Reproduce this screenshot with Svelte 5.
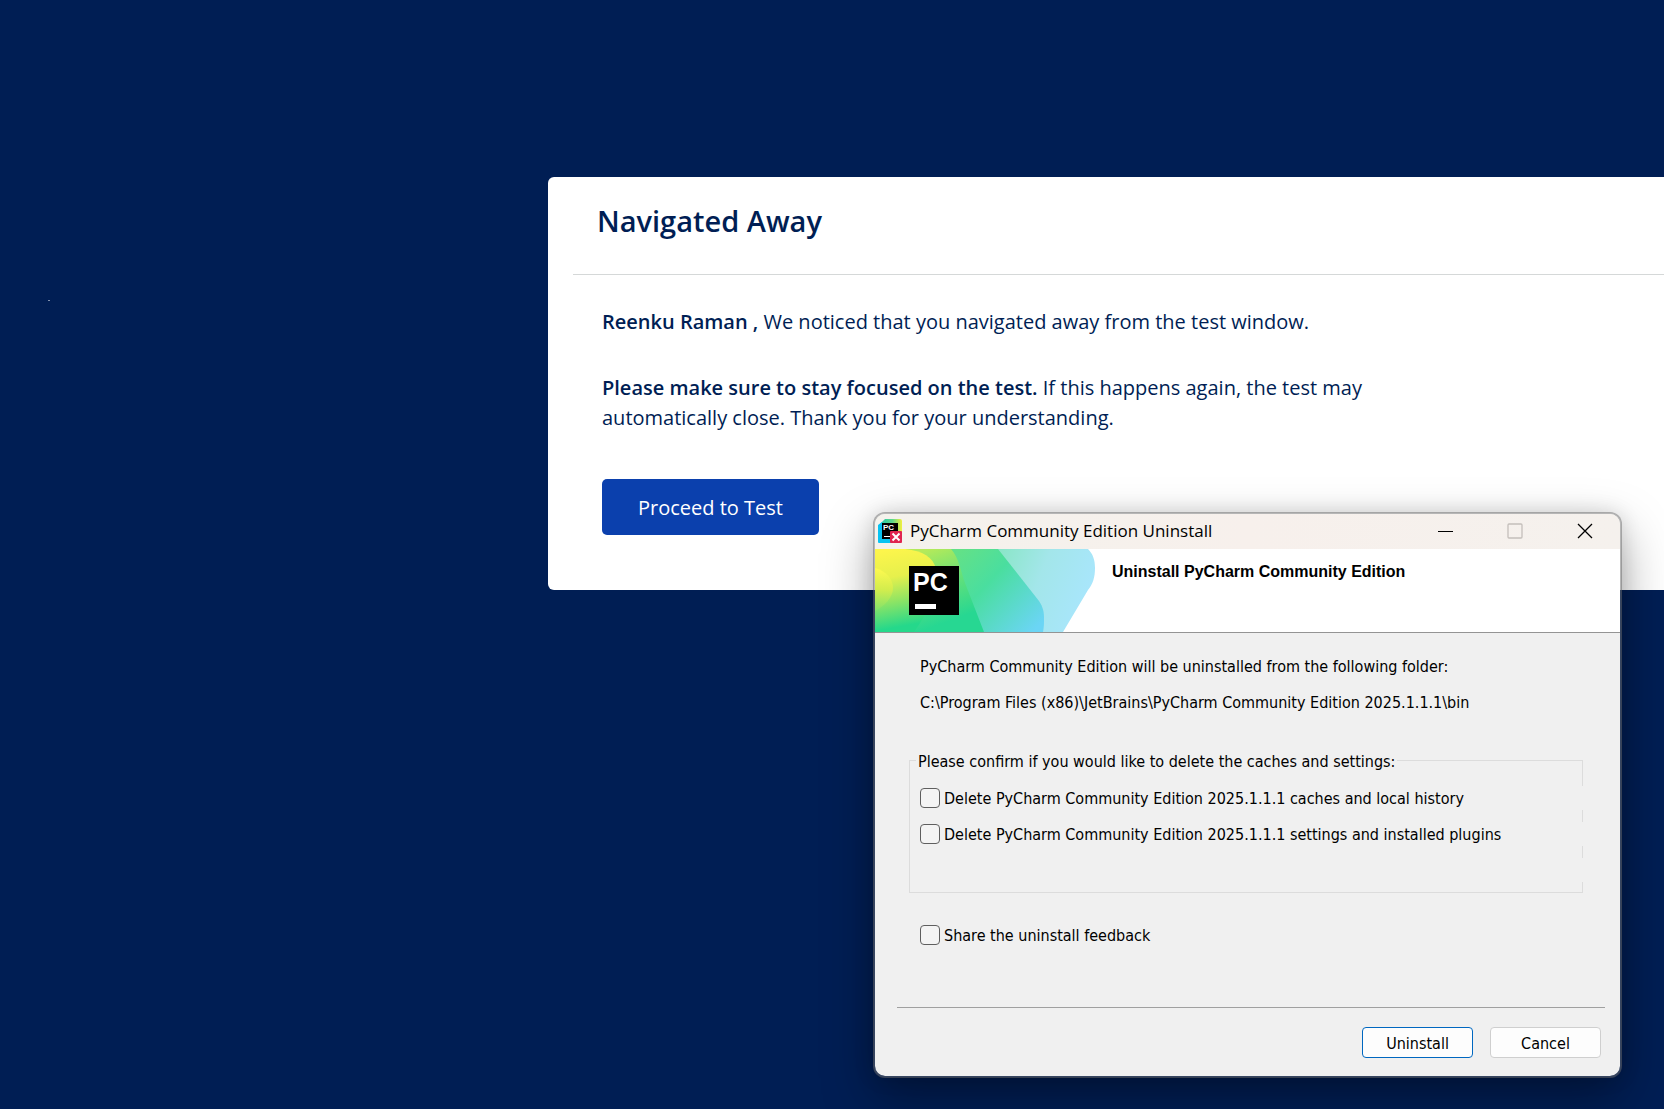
<script>
  let clearCaches = $state(false);
  let clearSettings = $state(false);
  let feedback = $state(false);
</script>

<main class="desktop">
  <span class="speck"></span>

  <section class="card">
    <header class="card-head"><h1>Navigated Away</h1></header>
    <div class="card-body">
      <p><strong>Reenku Raman ,</strong> We noticed that you navigated away from the test window.</p>
      <p>
        <strong>Please make sure to stay focused on the test.</strong> If this happens again, the test may<br />
        automatically close. Thank you for your understanding.
      </p>
      <button class="proceed" type="button">Proceed to Test</button>
    </div>
  </section>

  <div class="window" role="dialog" aria-labelledby="window-title">
    <div class="titlebar">
      <svg class="app-icon" viewBox="0 0 24 24" aria-hidden="true">
        <defs>
          <linearGradient id="iconTop" x1="0" y1="0" x2="1" y2="0">
            <stop offset="0" stop-color="#17c3b4" />
            <stop offset="0.6" stop-color="#5fd98a" />
            <stop offset="1" stop-color="#f3f03d" />
          </linearGradient>
        </defs>
        <path d="M0 7 7 0h15a2 2 0 0 1 2 2v13H7z" fill="url(#iconTop)" />
        <path d="M0 6 4 3v17h9v4H1a1 1 0 0 1-1-1z" fill="#07c3f2" />
        <rect x="4" y="4" width="16" height="16" fill="#000" />
        <text x="5" y="11" class="mini-pc">PC</text>
        <rect x="6" y="17" width="6" height="1" fill="#fff" />
        <rect x="12" y="12" width="12" height="12" rx="1" fill="#e0244f" />
        <path d="m14.500 14.500 7 7m0-7-7 7" stroke="#fff" stroke-width="2" />
      </svg>
      <span id="window-title" class="title">PyCharm Community Edition Uninstall</span>
      <button class="control" type="button" aria-label="Minimize">
        <svg viewBox="0 0 16 16"><path d="M1 8.500h15" stroke="#000" /></svg>
      </button>
      <button class="control" type="button" aria-label="Maximize" disabled>
        <svg viewBox="0 0 16 16"><rect x="1" y="1" width="14" height="14" rx="1" fill="none" stroke="#c4bfbb" stroke-width="1.300" /></svg>
      </button>
      <button class="control" type="button" aria-label="Close">
        <svg viewBox="0 0 16 16"><path d="m1 1 14 14M15 1 1 15" stroke="#000" stroke-width="1.300" /></svg>
      </button>
    </div>

    <div class="banner">
      <svg class="art" viewBox="0 0 222 83" aria-hidden="true">
        <defs>
          <linearGradient id="pale" x1="0" y1="0" x2="1" y2="0.300">
            <stop offset="0" stop-color="#83e6bd" />
            <stop offset="0.550" stop-color="#a3e6ea" />
            <stop offset="1" stop-color="#a8e6fb" />
          </linearGradient>
          <linearGradient id="mid" gradientUnits="userSpaceOnUse" x1="85" y1="0" x2="165" y2="75">
            <stop offset="0" stop-color="#63e187" />
            <stop offset="0.400" stop-color="#4ade9f" />
            <stop offset="1" stop-color="#6bd5f5" />
          </linearGradient>
          <linearGradient id="leaf" gradientUnits="userSpaceOnUse" x1="55" y1="0" x2="80" y2="70">
            <stop offset="0" stop-color="#b4ea5a" />
            <stop offset="0.500" stop-color="#62e07a" />
            <stop offset="1" stop-color="#27d792" />
          </linearGradient>
          <linearGradient id="sun" gradientUnits="userSpaceOnUse" x1="20" y1="0" x2="34" y2="76">
            <stop offset="0" stop-color="#fcf54c" />
            <stop offset="0.350" stop-color="#e6f04c" />
            <stop offset="0.650" stop-color="#93e562" />
            <stop offset="1" stop-color="#25d88b" />
          </linearGradient>
          <linearGradient id="edge" x1="0" y1="0" x2="0" y2="1">
            <stop offset="0" stop-color="#fff950" />
            <stop offset="0.500" stop-color="#d3ed4d" />
            <stop offset="1" stop-color="#7fe26c" />
          </linearGradient>
        </defs>
        <path d="M110 0h103c5 5 7 11 7 19 0 9-2 16-7 22l-25 42h-78z" fill="url(#pale)" />
        <path d="M0 0h123l41 52c4 6 5 11 5 17 0 5 0 9-1 14H0z" fill="url(#mid)" />
        <path d="M0 0h76c8 9 9 20 14 34l19 49H0z" fill="url(#leaf)" />
        <path d="M0 0h30c18 2 28 8 31 20 0 24-8 44-22 63H0z" fill="url(#sun)" />
        <path d="M0 19c11 3 18 11 18 20 0 10-9 18-18 23z" fill="url(#edge)" />
        <rect x="34" y="17" width="50" height="49" fill="#000" />
        <text x="38" y="42" class="big-pc">PC</text>
        <rect x="40" y="55" width="21" height="5" fill="#fff" />
      </svg>
      <h2>Uninstall PyCharm Community Edition</h2>
    </div>

    <form class="content" onsubmit={(e) => e.preventDefault()}>
      <p>PyCharm Community Edition will be uninstalled from the following folder:</p>
      <p>C:\Program Files (x86)\JetBrains\PyCharm Community Edition 2025.1.1.1\bin</p>

      <fieldset>
        <legend>Please confirm if you would like to delete the caches and settings:</legend>
        <label class="option"><input type="checkbox" bind:checked={clearCaches} />Delete PyCharm Community Edition 2025.1.1.1 caches and local history</label>
        <label class="option"><input type="checkbox" bind:checked={clearSettings} />Delete PyCharm Community Edition 2025.1.1.1 settings and installed plugins</label>
        <div class="option"></div>
      </fieldset>

      <label class="option share"><input type="checkbox" bind:checked={feedback} />Share the uninstall feedback</label>

      <div class="actions">
        <button class="action primary" type="submit">Uninstall</button>
        <button class="action" type="button">Cancel</button>
      </div>
    </form>
  </div>
</main>

<style>
  :global(body) {
    margin: 0;
    background: #001e54;
  }
  .desktop {
    position: relative;
    min-height: 100vh;
    box-sizing: border-box;
    padding: 177px 0 0 548px;
    overflow: hidden;
    background: #001e54;
    font-family: "Open Sans", "Noto Sans", sans-serif;
  }
  .speck {
    position: absolute;
    left: 48px;
    top: 300px;
    width: 2px;
    height: 1px;
    background: #8090ad;
  }
  .card {
    background: #fff;
    border-radius: 6px 0 0 6px;
    color: #001e54;
    padding: 0 0 55px 25px;
  }
  .card-head {
    border-bottom: 1px solid #d5d8d8;
    padding: 22px 24px 31px;
  }
  h1 {
    margin: 0;
    font-size: 29px;
    line-height: 44px;
    font-weight: 600;
  }
  .card-body {
    padding: 32px 29px 0;
    font-size: 20px;
    line-height: 30px;
  }
  strong {
    font-weight: 600;
  }
  p {
    margin: 0;
  }
  .card-body p {
    margin-bottom: 36px;
  }
  .proceed {
    display: block;
    margin-top: 46px;
    padding: 2px 36px 0;
    height: 56px;
    border: 0;
    border-radius: 5px;
    background: #0b40ad;
    color: #fff;
    font: inherit;
  }
  .window {
    position: absolute;
    left: 873px;
    top: 512px;
    width: 745px;
    border: 2px solid rgba(110, 110, 110, 0.5);
    border-radius: 12px;
    background: #f0f0f0;
    background-clip: padding-box;
    overflow: hidden;
    box-shadow: 0 20px 50px rgba(0, 0, 0, 0.35), 0 0 20px rgba(0, 0, 0, 0.12);
    color: #000;
  }
  .titlebar {
    display: flex;
    align-items: center;
    height: 33px;
    padding: 0 0 2px 3px;
    background: linear-gradient(90deg, #f4f2ec, #f7f0ec 50%, #f5f1ed);
  }
  .app-icon {
    width: 24px;
    height: 24px;
  }
  .mini-pc {
    font: bold 8px "Liberation Sans", sans-serif;
    fill: #fff;
  }
  .title {
    flex: 1;
    padding-left: 8px;
    font-size: 17px;
  }
  .control {
    display: grid;
    place-items: center;
    width: 70px;
    height: 32px;
    padding: 0;
    border: 0;
    background: none;
  }
  .control svg {
    width: 16px;
    height: 16px;
  }
  .banner {
    display: flex;
    height: 83px;
    background: #fff;
    border-bottom: 1px solid #949494;
  }
  .art {
    width: 222px;
    height: 83px;
  }
  .big-pc {
    font: bold 25px "Liberation Sans", sans-serif;
    fill: #fff;
  }
  h2 {
    margin: 13px 0 0 15px;
    font: bold 16px/20px "Liberation Sans", sans-serif;
  }
  .content {
    padding: 22px 15px 18px 22px;
    font-family: "DejaVu Sans Condensed", "DejaVu Sans", sans-serif;
    font-size: 16px;
  }
  .content p {
    padding-left: 23px;
    line-height: 24px;
    margin-bottom: 12px;
  }
  fieldset {
    margin: 32px 22px 0 12px;
    padding: 0 0 10px 6px;
    border: 1px solid #dcdcdc;
    min-width: 0;
  }
  legend {
    padding: 3px 2px 0;
    line-height: 24px;
  }
  .option {
    display: flex;
    align-items: center;
    gap: 4px;
    height: 24px;
    margin: 0 -1px 12px 4px;
    background: #f0f0f0;
  }
  legend + .option {
    margin-top: 12px;
  }
  fieldset .option:last-child {
    margin-bottom: 0;
  }
  input {
    appearance: none;
    width: 20px;
    height: 20px;
    margin: 0;
    border: 1px solid #5f5f5f;
    border-radius: 4px;
    background: #f4f4f4;
  }
  input:checked {
    background: #0067c0;
  }
  .share {
    margin: 30px 0 60px 23px;
  }
  .actions {
    display: flex;
    justify-content: flex-end;
    gap: 17px;
    padding: 19px 4px 0 0;
    border-top: 1px solid #a0a0a0;
  }
  .action {
    width: 111px;
    height: 31px;
    padding: 1px 0 0;
    border: 1px solid #cfcfcf;
    border-radius: 4px;
    background: #fdfdfd;
    color: #000;
    font: inherit;
  }
  .primary {
    border-color: #0067c0;
  }
</style>
